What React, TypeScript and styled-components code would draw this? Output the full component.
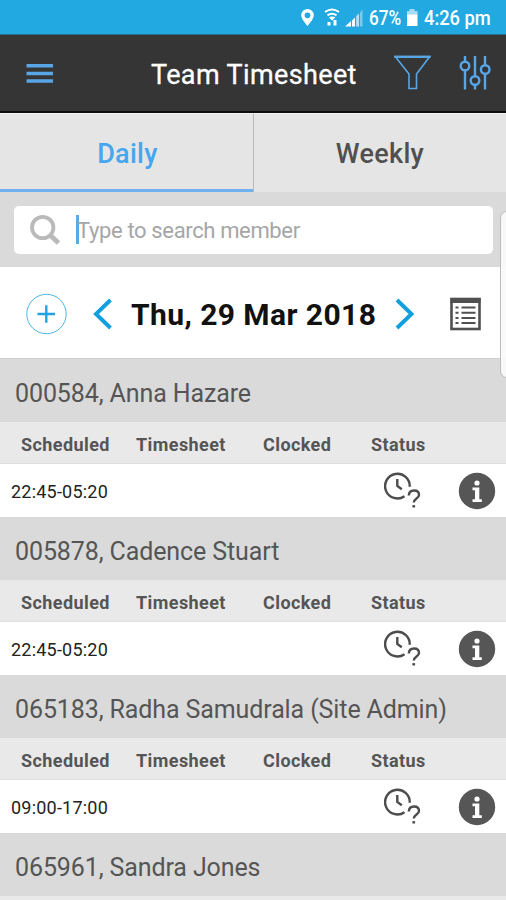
import React from 'react';
import styled, { createGlobalStyle } from 'styled-components';

const GlobalStyle = createGlobalStyle`
  * { box-sizing: border-box; }
  body { margin: 0; font-family: Roboto, sans-serif; background: #dadada; }
  svg { display: block; flex: none; }
`;

const Screen = styled.main`
  position: relative;
  width: 506px;
  height: 900px;
  overflow: hidden;
  background: #dadada;
`;

const StatusBar = styled.div`
  display: flex;
  align-items: center;
  height: 35px;
  padding-left: 300px;
  background: #22a9e1;
  border-bottom: 1px solid #2b6f8f;
`;

const StatusText = styled.span<{ $width: number; $scale: number }>`
  width: ${p => p.$width}px;
  padding-top: 2px;
  color: #fff;
  font-size: 21px;
  line-height: 33px;
  font-weight: 500;
  transform: scaleX(${p => p.$scale});
  transform-origin: left center;
  white-space: nowrap;
`;

const Header = styled.header`
  display: flex;
  align-items: center;
  height: 78px;
  padding: 0 15px 0 26px;
  background: #353535;
  border-bottom: 2px solid #0c0c0c;
`;

const Title = styled.h1`
  width: 216px;
  margin: 4px 27px 0 97px;
  color: #fff;
  font-size: 27px;
  line-height: 32px;
  font-weight: 400;
  letter-spacing: 0.37px;
  -webkit-text-stroke: 0.3px #fff;
  white-space: nowrap;
`;

const Tabs = styled.nav`
  display: grid;
  grid-template-columns: 254px 1fr;
  height: 79px;
`;

const Tab = styled.button<{ $active?: boolean }>`
  padding: 2px 0 0 ${p => (p.$active ? '2px' : '0')};
  border: 0;
  border-top: 1px solid #f3f3f3;
  border-right: ${p => (p.$active ? '1px solid #b8b8b8' : '0')};
  box-shadow: ${p => (p.$active ? 'inset 0 -3px #6fb0ee' : 'none')};
  background: #e5e5e5;
  color: ${p => (p.$active ? '#46a6ee' : '#505050')};
  font: 500 27px Roboto, sans-serif;
  letter-spacing: 0.3px;
`;

const SearchArea = styled.div`
  height: 75px;
  padding: 14px 13px 0 14px;
`;

const SearchBox = styled.div`
  display: flex;
  align-items: center;
  height: 48px;
  padding-left: 15px;
  border-radius: 5px;
  background: #fff;
`;

const Caret = styled.span`
  width: 3px;
  height: 29px;
  margin: 0 -2px 1px 15px;
  background: #5aaae8;
`;

const Placeholder = styled.span`
  padding-top: 1px;
  color: #a6a6a6;
  font-size: 22px;
  letter-spacing: -0.36px;
  white-space: nowrap;
`;

const DateBar = styled.section`
  display: flex;
  align-items: center;
  height: 92px;
  padding: 2px 0 0 26px;
  background: #fff;
  border-bottom: 1px solid #cecece;
`;

const PreviousButton = styled.div`
  margin-left: 25px;
`;

const DateText = styled.h2`
  width: 246px;
  margin: 3px 18px 0 19px;
  color: #111;
  font-size: 30px;
  line-height: 36px;
  font-weight: 700;
  letter-spacing: 0.43px;
  white-space: nowrap;
`;

const ListIconSlot = styled.div`
  margin-left: 35px;
`;

const Member = styled.section`
  height: 158px;
`;

const Name = styled.h3`
  height: 63px;
  margin: 0;
  padding: 4px 0 0 15px;
  color: #555;
  font-size: 25px;
  line-height: 62px;
  font-weight: 400;
  letter-spacing: -0.11px;
  white-space: nowrap;
`;

const Columns = styled.div`
  display: grid;
  grid-template-columns: 115px 127px 108px 1fr;
  height: 42px;
  padding-left: 21px;
  background: #e9e9e9;
  border-bottom: 1px solid #dedede;
  color: #555;
  font-size: 18px;
  line-height: 45px;
  font-weight: 700;
  letter-spacing: 0.42px;
`;

const Shift = styled.div`
  display: flex;
  align-items: center;
  height: 53px;
  padding: 0 10px 0 11px;
  background: #fff;
`;

const Hours = styled.span`
  width: 373px;
  padding-top: 1px;
  color: #222;
  font-size: 18px;
  letter-spacing: 0.22px;
`;

const TrailingIcon = styled.div`
  margin-left: auto;
`;

const NextEdge = styled.div`
  height: 4px;
  background: #e9e9e9;
`;

const EdgePanel = styled.aside`
  position: absolute;
  top: 211px;
  right: -8px;
  width: 14px;
  height: 167px;
  border: 1px solid #bcbcbc;
  border-radius: 7px;
  background: rgba(250, 250, 250, 0.95);
`;

const StatusIcons = () => (
  <svg width="69" height="35" viewBox="300 0 69 35" fill="#fff">
    <path fillRule="evenodd" d="M307.500 9a6.300 6.300 0 0 0-6.300 6.300c0 4 6.300 10.700 6.300 10.700s6.300-6.700 6.300-10.700A6.300 6.300 0 0 0 307.500 9Zm0 3.400a2.900 2.900 0 1 1 0 5.800 2.900 2.900 0 0 1 0-5.800Z" />
    <g fill="none" stroke="#fff" strokeWidth="2">
      <path d="M325 12q7-5 14 0M327.500 15.300q4.500-3 9 0" />
    </g>
    <path d="m329 17.500 3.200 3 3.200-3q-3.200-2-6.400 0ZM327.500 22h3v3.500h-3zM333.500 20h3v5.500h-3z" />
    <path d="M345 26.500 351 21v5.500zM352 20.500l3-3v9h-3z" />
    <path d="M356.200 16 359 13.500v13h-2.800z" opacity=".65" />
    <path d="m360 12.500 2.500-3v17H360z" opacity=".4" />
  </svg>
);

const BatteryIcon = () => (
  <svg width="20" height="35" viewBox="0 0 20 35" fill="#fff">
    <path d="M5.500 9h5v2h-5zM3 11h10.500v4H3z" opacity=".6" />
    <path d="M3 14.500h10.500V26H3z" />
  </svg>
);

const MenuIcon = () => (
  <svg width="28" height="22" viewBox="0 -2 28 22" fill="#58a6e6">
    <path d="M.500 0h26.500v3.500H.500zM.500 7.700h26.500v3.500H.500zM.500 15.300h26.500v3.500H.500z" />
  </svg>
);

const FilterIcon = () => (
  <svg width="38" height="36" viewBox="0 0 38 36" fill="none" stroke="#58a6e6" strokeWidth="1.600">
    <path d="M1.200 1.500h34.600L22.500 19v14.500h-7.500V19Z" />
    <path d="M.300 1.800h36.200" strokeWidth="2.200" />
  </svg>
);

const SlidersIcon = () => (
  <svg width="32" height="36" viewBox="0 0 32 36" fill="none" stroke="#58a6e6" strokeWidth="2.400">
    <path d="M6 1v5.500M6 15v19.500M16 1v20M16 30v4.500M26 1v9.500M26 19v15.500" />
    <circle cx="6" cy="11" r="4.300" />
    <circle cx="16" cy="25.500" r="4.300" />
    <circle cx="26.200" cy="14.500" r="4.300" />
  </svg>
);

const SearchIcon = () => (
  <svg width="32" height="32" viewBox="0 0 32 32" fill="none" stroke="#bababa">
    <circle cx="13.700" cy="13.500" r="10.700" strokeWidth="3.800" />
    <path d="m21.500 21.500 8 7.500" strokeWidth="5" />
  </svg>
);

const AddIcon = () => (
  <svg width="41" height="42" viewBox="0 0 41 42" fill="none" stroke="#22a3df">
    <circle cx="20.500" cy="21" r="19.700" strokeWidth="1" opacity=".8" />
    <path d="M11.500 21H29M20.300 12.300v17.400" strokeWidth="2.400" />
  </svg>
);

const Arrow = ({ next }: { next?: boolean }) => (
  <svg width="20" height="34" viewBox="0 0 20 34" fill="none" stroke="#129fdd" strokeWidth="3.900">
    <path d={next ? 'M2 3 16.500 17 2 31' : 'M18.500 3 4 17 18.500 31'} />
  </svg>
);

const ListIcon = () => (
  <svg width="31" height="34" viewBox="0 0 31 34">
    <rect x="1.500" y="2" width="28" height="30" fill="#fff" stroke="#505050" strokeWidth="2.600" />
    <path fill="#505050" d="M.500 1h30v5H.500z" />
    <g stroke="#505050" strokeWidth="2">
      <path d="M5.500 10.500h3M5.500 15.700h3M5.500 20.900h3M5.500 26.100h3M11.500 10.500h14M11.500 15.700h14M11.500 20.900h14M11.500 26.100h14" />
    </g>
  </svg>
);

const ClockQuestionIcon = () => (
  <svg width="38" height="38" viewBox="0 0 38 38" fill="none" stroke="#4c4c4c" strokeWidth="2.400">
    <path d="M20.500 24.200A12.300 12.300 0 1 1 25.700 14.800" />
    <path d="M13.300 7v7l4.500 3.300" />
    <path d="M24.800 23.500q.2-5 5.200-5 5 0 5 4.400c0 3.600-5.200 3.500-5.200 7.600" />
    <path d="M28.400 34.300h2.700" strokeWidth="2.400" />
  </svg>
);

const InfoIcon = () => (
  <svg width="38" height="38" viewBox="0 0 38 38">
    <circle cx="19" cy="19" r="18.200" fill="#565656" />
    <g fill="#fff">
      <circle cx="19" cy="11" r="2.600" />
      <path d="M14.500 15.500h6.800v11.700h2.500V30h-9.300v-2.800H17v-9h-2.500z" />
    </g>
  </svg>
);

const members = [
  { name: '000584, Anna Hazare', hours: '22:45-05:20' },
  { name: '005878, Cadence Stuart', hours: '22:45-05:20' },
  { name: '065183, Radha Samudrala (Site Admin)', hours: '09:00-17:00' },
];

export default function App() {
  return (
    <>
      <GlobalStyle />
      <Screen>
        <StatusBar>
          <StatusIcons />
          <StatusText $width={35} $scale={0.82}>67%</StatusText>
          <BatteryIcon />
          <StatusText $width={70} $scale={0.87}>4:26 pm</StatusText>
        </StatusBar>
        <Header>
          <MenuIcon />
          <Title>Team Timesheet</Title>
          <FilterIcon />
          <TrailingIcon><SlidersIcon /></TrailingIcon>
        </Header>
        <Tabs>
          <Tab $active>Daily</Tab>
          <Tab>Weekly</Tab>
        </Tabs>
        <SearchArea>
          <SearchBox>
            <SearchIcon />
            <Caret />
            <Placeholder>Type to search member</Placeholder>
          </SearchBox>
        </SearchArea>
        <DateBar>
          <AddIcon />
          <PreviousButton><Arrow /></PreviousButton>
          <DateText>Thu, 29 Mar 2018</DateText>
          <Arrow next />
          <ListIconSlot><ListIcon /></ListIconSlot>
        </DateBar>
        {members.map(member => (
          <Member key={member.name}>
            <Name>{member.name}</Name>
            <Columns>
              <span>Scheduled</span>
              <span>Timesheet</span>
              <span>Clocked</span>
              <span>Status</span>
            </Columns>
            <Shift>
              <Hours>{member.hours}</Hours>
              <ClockQuestionIcon />
              <TrailingIcon><InfoIcon /></TrailingIcon>
            </Shift>
          </Member>
        ))}
        <Name>065961, Sandra Jones</Name>
        <NextEdge />
        <EdgePanel />
      </Screen>
    </>
  );
}
